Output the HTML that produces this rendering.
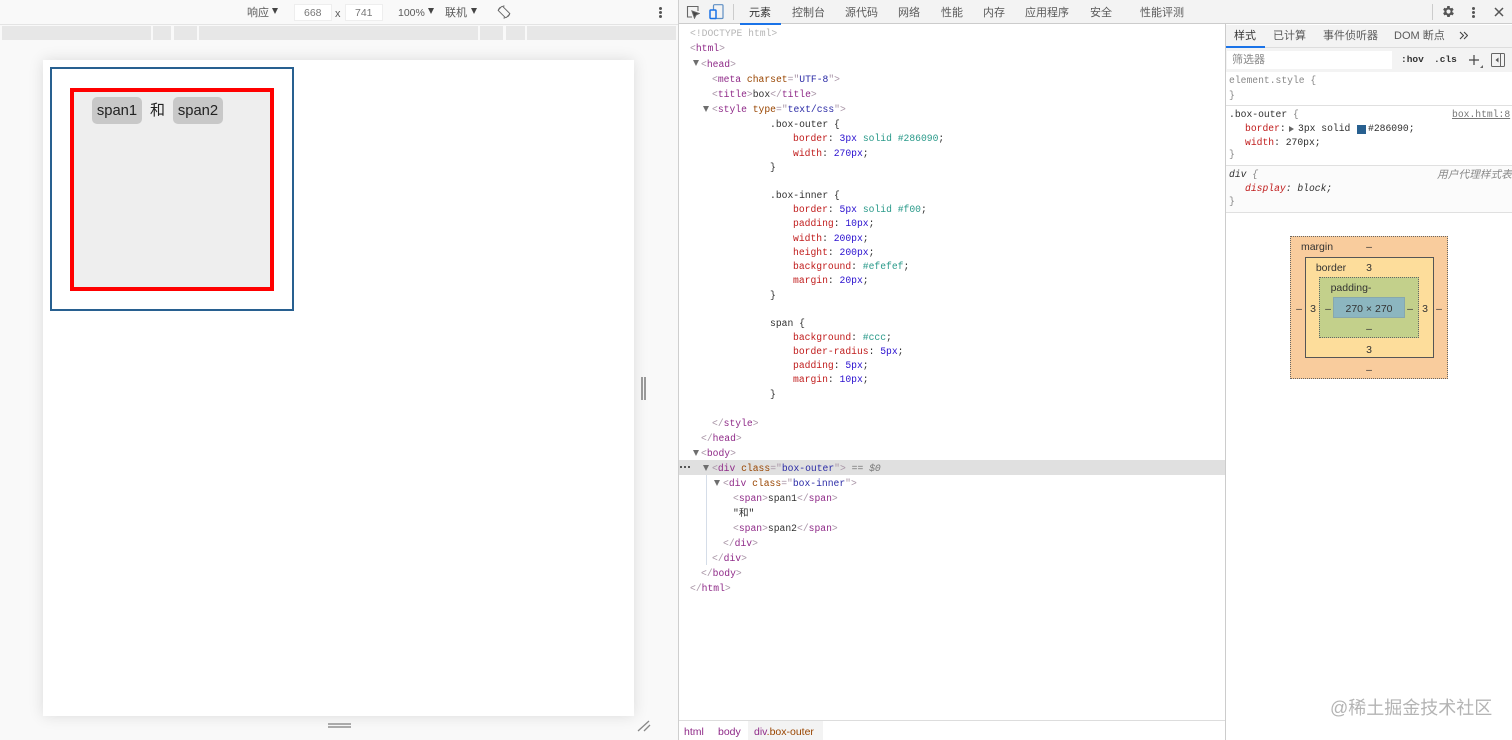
<!DOCTYPE html>
<html><head><meta charset="utf-8"><title>box</title>
<style>
html,body{margin:0;padding:0}
body{width:1512px;height:740px;overflow:hidden;position:relative;background:#fff;font-family:"Liberation Sans","Noto Sans CJK SC",sans-serif;color:#444}
div,span,svg{box-sizing:border-box}
.a{position:absolute}
.t{position:absolute;white-space:pre;font-size:11px;line-height:14px;color:#5a5a5a}
.m{position:absolute;white-space:pre;font:9.7px/14px "Liberation Mono","Noto Sans CJK SC",monospace;color:#303030}
.b{color:#a894a6}.g{color:#8f2a88}.n{color:#994500}.v{color:#2a2aa6}.c{color:#c01c1c}.u{color:#2a10cf}.e{color:#2a9a8a}
.tri{position:absolute;width:0;height:0;border-left:3.5px solid transparent;border-right:3.5px solid transparent;border-top:6px solid #6e6e6e}
.bm{position:absolute;white-space:pre;font-size:10.5px;line-height:12px;color:#333;text-align:center;transform:translateX(-50%)}
.dom{position:absolute;left:0;top:1px;width:1512px;height:0}
</style></head><body>

<!-- left pane -->
<div class="a" style="left:0;top:0;width:678px;height:740px;background:#f9f9f9"></div>
<div class="a" style="left:0;top:24px;width:678px;height:1px;background:#e4e4e4"></div>
<div class="t" style="left:247px;top:6px">响应</div><div class="tri" style="left:272px;top:8px;border-top-color:#444"></div>
<div class="a" style="left:294px;top:4px;width:38px;height:17px;background:#fff;border:1px solid #eee"></div>
<div class="t" style="left:304px;top:6px;color:#777;font-size:10.5px">668</div>
<div class="t" style="left:335px;top:7px">x</div>
<div class="a" style="left:345px;top:4px;width:38px;height:17px;background:#fff;border:1px solid #eee"></div>
<div class="t" style="left:355px;top:6px;color:#777;font-size:10.5px">741</div>
<div class="t" style="left:398px;top:6px;font-size:10.5px">100%</div><div class="tri" style="left:428px;top:8px;border-top-color:#444"></div>
<div class="t" style="left:445px;top:6px">联机</div><div class="tri" style="left:471px;top:8px;border-top-color:#444"></div>
<svg class="a" style="left:497px;top:5px" width="14" height="14" viewBox="0 0 14 14" fill="none" stroke="#6a6a6a" stroke-width="1"><rect x="4" y="1.500" width="6" height="11" rx="1" transform="rotate(-45 7 7)"/><path d="M1.200 6A6 6 0 0 1 3.500 2.200M6 1.100A6 6 0 0 1 7.500 1M12.800 8A6 6 0 0 1 10.500 11.800M8 12.900A6 6 0 0 1 6.500 13"/></svg>
<div class="a" style="left:659px;top:7px;width:3px;height:3px;background:#555;border-radius:50%;box-shadow:0 4px 0 #555,0 8px 0 #555"></div>

<div class="a" style="left:2px;top:26px;width:674px;height:14px;background:#e7e7e7"></div>
<div class="a" style="left:151px;top:26px;width:2px;height:14px;background:#f9f9f9"></div>
<div class="a" style="left:171px;top:26px;width:3px;height:14px;background:#f9f9f9"></div>
<div class="a" style="left:197px;top:26px;width:2px;height:14px;background:#f9f9f9"></div>
<div class="a" style="left:478px;top:26px;width:2px;height:14px;background:#f9f9f9"></div>
<div class="a" style="left:503px;top:26px;width:3px;height:14px;background:#f9f9f9"></div>
<div class="a" style="left:525px;top:26px;width:2px;height:14px;background:#f9f9f9"></div>

<!-- viewport -->
<div class="a" style="left:43px;top:60px;width:591px;height:656px;background:#fff;box-shadow:0 0 14px rgba(0,0,0,.12)"></div>
<div class="a" style="left:50px;top:67px;width:244px;height:244px;border:2.5px solid #286090"></div>
<div class="a" style="left:70px;top:88px;width:204px;height:203px;border:4.5px solid #f00;background:#eeeeee"></div>
<div class="a" style="left:92px;top:97px;width:50px;height:27px;background:#c8c8c8;border-radius:5px;font-size:14.8px;line-height:29px;color:#222;text-align:center">span1</div>
<div class="a" style="left:150px;top:97px;font-size:15px;line-height:27px;color:#222">和</div>
<div class="a" style="left:173px;top:97px;width:50px;height:27px;background:#c8c8c8;border-radius:5px;font-size:14.8px;line-height:29px;color:#222;text-align:center">span2</div>
<div class="a" style="left:641px;top:377px;width:2px;height:23px;background:#999;box-shadow:3px 0 0 #999"></div>
<div class="a" style="left:328px;top:723px;width:23px;height:2px;background:#aaa;box-shadow:0 3px 0 #aaa"></div>
<svg class="a" style="left:637px;top:719px" width="14" height="13" fill="none" stroke="#888" stroke-width="1.300"><path d="M1 12L12 2M7 12L13 6"/></svg>

<!-- devtools top -->
<div class="a" style="left:678px;top:0;width:1px;height:740px;background:#cfcfcf"></div>
<div class="a" style="left:679px;top:0;width:833px;height:24px;background:#f3f3f3;border-bottom:1px solid #ccc"></div>
<svg class="a" style="left:686px;top:5px" width="14" height="14" fill="none" stroke="#666" stroke-width="1.100"><path d="M6 12H1.500V1.500H12V6"/><path d="M6 6L13 8.500L10 10L8.500 13Z" fill="#444"/></svg>
<svg class="a" style="left:709px;top:4px" width="15" height="16" fill="none"><rect x="4.500" y=".7" width="9.500" height="13.800" rx="1" stroke="#5f8fc4" stroke-width="1.200"/><rect x="1" y="6" width="6" height="8.500" rx=".8" fill="#f3f3f3" stroke="#1a73e8" stroke-width="1.500"/></svg>
<div class="a" style="left:733px;top:4px;width:1px;height:16px;background:#ccc"></div>
<div class="t" style="left:749px;top:6px;color:#333">元素</div>
<div class="a" style="left:740px;top:23px;width:41px;height:2px;background:#1a73e8"></div>
<div class="t" style="left:792px;top:6px">控制台</div>
<div class="t" style="left:845px;top:6px">源代码</div>
<div class="t" style="left:898px;top:6px">网络</div>
<div class="t" style="left:941px;top:6px">性能</div>
<div class="t" style="left:983px;top:6px">内存</div>
<div class="t" style="left:1025px;top:6px">应用程序</div>
<div class="t" style="left:1090px;top:6px">安全</div>
<div class="t" style="left:1140px;top:6px">性能评测</div>
<div class="a" style="left:1432px;top:4px;width:1px;height:16px;background:#ccc"></div>
<svg class="a" style="left:1441px;top:4px" width="15" height="15" viewBox="0 0 24 24" fill="#555"><path fill-rule="evenodd" d="M19.400 13a7.500 7.500 0 0 0 0-2l2.100-1.600-2-3.500-2.500 1a7.500 7.500 0 0 0-1.700-1L15.300 3.200h-4l-.4 2.700a7.500 7.500 0 0 0-1.700 1l-2.500-1-2 3.500L6.800 11a7.500 7.500 0 0 0 0 2l-2.100 1.600 2 3.500 2.500-1a7.500 7.500 0 0 0 1.700 1l.4 2.700h4l.4-2.700a7.500 7.500 0 0 0 1.700-1l2.500 1 2-3.500zM13.300 15.300a3.300 3.300 0 1 1 0-6.600 3.300 3.300 0 0 1 0 6.600z" transform="translate(-1.300 0)"/></svg>
<div class="a" style="left:1472px;top:7px;width:3px;height:3px;background:#555;border-radius:50%;box-shadow:0 4px 0 #555,0 8px 0 #555"></div>
<svg class="a" style="left:1494px;top:7px" width="10" height="10" fill="none" stroke="#555" stroke-width="1.500"><path d="M1 1L9 9M9 1L1 9"/></svg>

<!-- DOM tree -->
<div class="a" style="left:679px;top:460px;width:546px;height:15px;background:#e0e0e0"></div>
<div class="a" style="left:706px;top:475px;width:1px;height:90px;background:#d5dde8"></div>
<div class="a" style="left:680px;top:466px;width:2px;height:2px;background:#555;box-shadow:4px 0 0 #555,8px 0 0 #555"></div>
<div class="tri" style="left:693px;top:60px"></div>
<div class="tri" style="left:703px;top:106px"></div>
<div class="tri" style="left:693px;top:450px"></div>
<div class="tri" style="left:703px;top:465px"></div>
<div class="tri" style="left:714px;top:480px"></div>

<div class="dom">
<div class="m" style="left:690px;top:26px;color:#b5b5b5">&lt;!DOCTYPE html&gt;</div>
<div class="m" style="left:690px;top:41px"><span class="b">&lt;</span><span class="g">html</span><span class="b">&gt;</span></div>
<div class="m" style="left:701px;top:56.5px"><span class="b">&lt;</span><span class="g">head</span><span class="b">&gt;</span></div>
<div class="m" style="left:712px;top:72px"><span class="b">&lt;</span><span class="g">meta</span> <span class="n">charset</span><span class="b">="</span><span class="v">UTF-8</span><span class="b">"&gt;</span></div>
<div class="m" style="left:712px;top:87px"><span class="b">&lt;</span><span class="g">title</span><span class="b">&gt;</span>box<span class="b">&lt;/</span><span class="g">title</span><span class="b">&gt;</span></div>
<div class="m" style="left:712px;top:102px"><span class="b">&lt;</span><span class="g">style</span> <span class="n">type</span><span class="b">="</span><span class="v">text/css</span><span class="b">"&gt;</span></div>
<div class="m" style="left:770px;top:117px">.box-outer {</div>
<div class="m" style="left:793px;top:131px"><span class="c">border</span>: <span class="u">3px</span> <span class="e">solid #286090</span>;</div>
<div class="m" style="left:793px;top:145.5px"><span class="c">width</span>: <span class="u">270px</span>;</div>
<div class="m" style="left:770px;top:160px">}</div>
<div class="m" style="left:770px;top:188px">.box-inner {</div>
<div class="m" style="left:793px;top:202px"><span class="c">border</span>: <span class="u">5px</span> <span class="e">solid #f00</span>;</div>
<div class="m" style="left:793px;top:216px"><span class="c">padding</span>: <span class="u">10px</span>;</div>
<div class="m" style="left:793px;top:230.5px"><span class="c">width</span>: <span class="u">200px</span>;</div>
<div class="m" style="left:793px;top:244.5px"><span class="c">height</span>: <span class="u">200px</span>;</div>
<div class="m" style="left:793px;top:259px"><span class="c">background</span>: <span class="e">#efefef</span>;</div>
<div class="m" style="left:793px;top:273px"><span class="c">margin</span>: <span class="u">20px</span>;</div>
<div class="m" style="left:770px;top:287.5px">}</div>
<div class="m" style="left:770px;top:316px">span {</div>
<div class="m" style="left:793px;top:330px"><span class="c">background</span>: <span class="e">#ccc</span>;</div>
<div class="m" style="left:793px;top:344px"><span class="c">border-radius</span>: <span class="u">5px</span>;</div>
<div class="m" style="left:793px;top:358px"><span class="c">padding</span>: <span class="u">5px</span>;</div>
<div class="m" style="left:793px;top:372px"><span class="c">margin</span>: <span class="u">10px</span>;</div>
<div class="m" style="left:770px;top:387px">}</div>
<div class="m" style="left:712px;top:416px"><span class="b">&lt;/</span><span class="g">style</span><span class="b">&gt;</span></div>
<div class="m" style="left:701px;top:430.5px"><span class="b">&lt;/</span><span class="g">head</span><span class="b">&gt;</span></div>
<div class="m" style="left:701px;top:446px"><span class="b">&lt;</span><span class="g">body</span><span class="b">&gt;</span></div>
<div class="m" style="left:712px;top:461px"><span class="b">&lt;</span><span class="g">div</span> <span class="n">class</span><span class="b">="</span><span class="v">box-outer</span><span class="b">"&gt;</span> <span style="color:#777">== <i>$0</i></span></div>
<div class="m" style="left:723px;top:476px"><span class="b">&lt;</span><span class="g">div</span> <span class="n">class</span><span class="b">="</span><span class="v">box-inner</span><span class="b">"&gt;</span></div>
<div class="m" style="left:733px;top:491px"><span class="b">&lt;</span><span class="g">span</span><span class="b">&gt;</span>span1<span class="b">&lt;/</span><span class="g">span</span><span class="b">&gt;</span></div>
<div class="m" style="left:733px;top:506px">"和"</div>
<div class="m" style="left:733px;top:521px"><span class="b">&lt;</span><span class="g">span</span><span class="b">&gt;</span>span2<span class="b">&lt;/</span><span class="g">span</span><span class="b">&gt;</span></div>
<div class="m" style="left:723px;top:536px"><span class="b">&lt;/</span><span class="g">div</span><span class="b">&gt;</span></div>
<div class="m" style="left:712px;top:551px"><span class="b">&lt;/</span><span class="g">div</span><span class="b">&gt;</span></div>
<div class="m" style="left:701px;top:566px"><span class="b">&lt;/</span><span class="g">body</span><span class="b">&gt;</span></div>
<div class="m" style="left:690px;top:581px"><span class="b">&lt;/</span><span class="g">html</span><span class="b">&gt;</span></div>
</div>

<!-- breadcrumb -->
<div class="a" style="left:679px;top:720px;width:546px;height:1px;background:#ddd"></div>
<div class="a" style="left:748px;top:721px;width:75px;height:19px;background:#f3f3f3"></div>
<div class="t" style="left:684px;top:725px;color:#8f2a88;font-size:10.5px">html</div>
<div class="t" style="left:718px;top:725px;color:#8f2a88;font-size:10.5px">body</div>
<div class="t" style="left:754px;top:725px;color:#8f2a88;font-size:10.5px">div<span style="color:#994500">.box-outer</span></div>

<!-- styles pane -->
<div class="a" style="left:1225px;top:24px;width:1px;height:716px;background:#ccc"></div>
<div class="a" style="left:1226px;top:25px;width:286px;height:23px;background:#f3f3f3;border-bottom:1px solid #ddd"></div>
<div class="a" style="left:1226px;top:46px;width:39px;height:2px;background:#1a73e8"></div>
<div class="t" style="left:1234px;top:29px;color:#333">样式</div>
<div class="t" style="left:1273px;top:29px">已计算</div>
<div class="t" style="left:1323px;top:29px">事件侦听器</div>
<div class="t" style="left:1394px;top:29px">DOM 断点</div>
<svg class="a" style="left:1459px;top:31px" width="9" height="9" fill="none" stroke="#444" stroke-width="1.1"><path d="M1 1L4.500 4.500L1 8M5 1L8.500 4.500L5 8"/></svg>
<div class="a" style="left:1226px;top:48px;width:286px;height:24px;background:#f3f3f3"></div>
<div class="a" style="left:1227px;top:51px;width:165px;height:18px;background:#fff"></div>
<div class="t" style="left:1232px;top:53px;color:#888">筛选器</div>
<div class="m" style="left:1401px;top:53px;color:#333;font-weight:bold;font-size:9.5px">:hov</div>
<div class="m" style="left:1434px;top:53px;color:#333;font-weight:bold;font-size:9.5px">.cls</div>
<svg class="a" style="left:1468px;top:54px" width="16" height="15" fill="none" stroke="#444" stroke-width="1.2"><path d="M6 1V11M1 6H11"/><path d="M15 11V14H12Z" fill="#666" stroke="none"/></svg>
<svg class="a" style="left:1491px;top:53px" width="14" height="14" fill="none" stroke="#666"><rect x=".5" y=".5" width="13" height="13" rx="1"/><path d="M9.500 1V13" stroke-width="1"/><path d="M7.500 4.500V9.500L4.500 7Z" fill="#555" stroke="none"/></svg>

<div class="a" style="left:1226px;top:165px;width:286px;height:47px;background:#fbfbfb"></div>
<div class="a" style="left:1226px;top:105px;width:286px;height:1px;background:#e0e0e0"></div>
<div class="a" style="left:1226px;top:165px;width:286px;height:1px;background:#e0e0e0"></div>
<div class="a" style="left:1226px;top:212px;width:286px;height:1px;background:#e0e0e0"></div>
<div class="m" style="left:1229px;top:73.5px;color:#888">element.style <span style="color:#888">{</span></div>
<div class="m" style="left:1229px;top:88.5px;color:#888">}</div>
<div class="m" style="left:1229px;top:108px">.box-outer <span style="color:#888">{</span></div>
<div class="m" style="left:1452px;top:108px;color:#777;text-decoration:underline">box.html:8</div>
<div class="m" style="left:1245px;top:122px"><span class="c">border</span>:</div>
<div class="a" style="left:1289px;top:126px;width:0;height:0;border-top:3.5px solid transparent;border-bottom:3.5px solid transparent;border-left:5px solid #666"></div>
<div class="m" style="left:1298px;top:122px">3px solid</div>
<div class="a" style="left:1357px;top:125px;width:9px;height:9px;background:#286090"></div>
<div class="m" style="left:1368px;top:122px">#286090;</div>
<div class="m" style="left:1245px;top:135.5px"><span class="c">width</span>: 270px;</div>
<div class="m" style="left:1229px;top:148px;color:#888">}</div>
<div class="m" style="left:1229px;top:167.5px;font-style:italic">div <span style="color:#888">{</span></div>
<div class="t" style="left:1437px;top:167.5px;color:#888;font-style:italic;font-size:10.7px">用户代理样式表</div>
<div class="m" style="left:1245px;top:182px;font-style:italic"><span class="c">display</span>: block;</div>
<div class="m" style="left:1229px;top:195px;color:#888">}</div>

<!-- box model -->
<div class="a" style="left:1290px;top:236px;width:158px;height:143px;background:#f9cc9d;border:1px dotted #666"></div>
<div class="a" style="left:1305px;top:257px;width:129px;height:101px;background:#fddd9b;border:1px solid #555"></div>
<div class="a" style="left:1319px;top:277px;width:100px;height:61px;background:#c3d08b;border:1px dotted #666"></div>
<div class="a" style="left:1333px;top:297px;width:72px;height:21px;background:#8cb6c0;border:1px solid #87a8ae"></div>
<div class="bm" style="left:1317px;top:241px">margin</div><div class="bm" style="left:1369px;top:241px">–</div>
<div class="bm" style="left:1331px;top:262px">border</div><div class="bm" style="left:1369px;top:262px">3</div>
<div class="bm" style="left:1351px;top:282px">padding-</div>
<div class="bm" style="left:1369px;top:303px">270 × 270</div>
<div class="bm" style="left:1299px;top:303px">–</div><div class="bm" style="left:1313px;top:303px">3</div><div class="bm" style="left:1328px;top:303px">–</div>
<div class="bm" style="left:1410px;top:303px">–</div><div class="bm" style="left:1425px;top:303px">3</div><div class="bm" style="left:1439px;top:303px">–</div>
<div class="bm" style="left:1369px;top:323px">–</div>
<div class="bm" style="left:1369px;top:344px">3</div>
<div class="bm" style="left:1369px;top:364px">–</div>

<div class="a" style="left:1330px;top:696px;font-size:18px;line-height:24px;color:#b4b4b4;white-space:pre">@稀土掘金技术社区</div>
</body></html>
